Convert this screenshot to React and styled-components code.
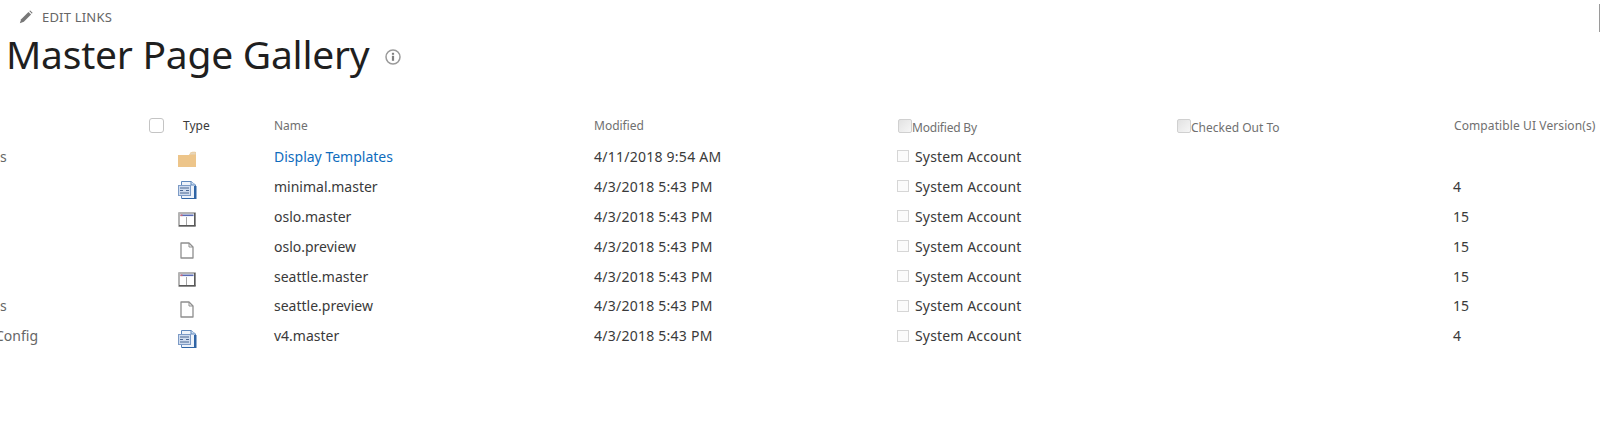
import React from "react";
import styled, { createGlobalStyle } from "styled-components";

const Global = createGlobalStyle`
  html, body { margin: 0; padding: 0; background: #fff; }
  body { font-family: "Noto Sans", "Open Sans", sans-serif; color: #333; overflow: hidden; }
`;
const Page = styled.div`
  width: 1600px; height: 425px; position: relative; overflow: hidden; background: #fff;
`;
const EditLinks = styled.div`
  display: flex; align-items: center; gap: 9px; height: 18px; padding: 8px 0 0 19px;
  font-size: 13px; letter-spacing: 0.2px; color: #666;
`;
const TitleRow = styled.div`
  display: flex; align-items: center; gap: 15px; padding: 1px 0 0 6px; height: 54px;
`;
const Title = styled.h1`
  margin: 0; font-size: 39px; font-weight: 400; line-height: 54px; color: #1f1f1f; letter-spacing: -0.25px;
`;
const InfoWrap = styled.span`
  display: flex; margin-top: 5px;
`;
const Table = styled.div`
  margin-top: 29px;
`;
const Row = styled.div`
  display: grid;
  grid-template-columns: 149px 28px 97px 320px 304px 279px 276px 1fr;
  align-items: center;
  height: ${p => (p.$header ? "31.5px" : "29.9px")};
  font-size: ${p => (p.$header ? "12px" : "14px")};
  color: ${p => (p.$header ? "#707070" : "#3a3a3a")};
  white-space: nowrap;
`;
const Nav = styled.div`
  overflow: hidden; font-size: 14px; color: #666; margin-left: ${p => p.$shift || 0}px;
`;
const RoundCheck = styled.span`
  display: block; width: 13px; height: 13px; border: 1px solid #c4c4c4; border-radius: 3px;
`;
const TypeHead = styled.div`
  padding-left: 6px; color: #3a3a3a;
`;
const IconCell = styled.div`
  display: flex; align-items: center;
  padding-left: ${p => p.$pad}px;
  margin-top: ${p => p.$drop}px;
`;
const FolderLink = styled.span`
  color: #0f6cbd;
`;
const DateCell = styled.div`
  letter-spacing: 0.25px;
`;
const VersionHead = styled.div`
  letter-spacing: 0.1px; margin-left: 1px;
`;
const HeadCheckCell = styled.div`
  display: flex; align-items: flex-start; margin-top: 3px;
  letter-spacing: ${p => p.$spacing || 0}px;
`;
const GrayCheck = styled.span`
  display: block; width: 12px; height: 12px;
  border: 1px solid #d0d0d0; border-radius: 2px;
  background: linear-gradient(135deg, #e2e2e2, #f6f6f6);
`;
const PersonCell = styled.div`
  display: flex; align-items: center; gap: 6px; margin-left: -1px; letter-spacing: 0.15px;
`;
const Presence = styled.span`
  display: block; width: 10px; height: 10px; border: 1px solid #d6d6d6; background: #fbfbfb;
`;
const ScrollMark = styled.span`
  position: absolute; right: 0; top: 4px; width: 1px; height: 28px; background: #9a9a9a;
`;

const Pencil = () => (
  <svg width="14" height="14" viewBox="0 0 13 13">
    <path d="M.8 12.2 L2 8.5 L8.8 1.8 L11.2 4.2 L4.5 11 Z" fill="#777" />
    <path d="M9.6 1 L10.4 .4 L12.6 2.6 L12 3.4 Z" fill="#777" />
  </svg>
);
const Info = () => (
  <svg width="16" height="16" viewBox="0 0 16 16">
    <circle cx="8" cy="8" r="7" fill="none" stroke="#9a9a9a" strokeWidth="1.5" />
    <rect x="6.9" y="6.8" width="2.2" height="5" fill="#808080" />
    <rect x="6.9" y="3.8" width="2.2" height="2" fill="#808080" />
  </svg>
);
const Folder = () => (
  <svg width="18" height="16" viewBox="0 0 18 16">
    <path d="M0 4 H11 L12.5 1.5 C13.5 .6 16 .6 18 1 V16 H0 Z" fill="#edc58a" />
    <path d="M12.8 1.6 L17.6 1.2 V3.6 H11.8 Z" fill="#e6d6bb" />
  </svg>
);
const Master = () => (
  <svg width="19" height="18" viewBox="0 0 19 18">
    <path d="M3.5 .5 H13 L17.5 4 V17.5 H3.5 Z" fill="#eef3fa" stroke="#5f88bd" />
    <path d="M13 .5 V4 H17.5" fill="#cfe0f2" stroke="#5f88bd" />
    <path d="M16 5 H18.5 V18 H4 V17 H16 Z" fill="#2f64a5" />
    <rect x="0.5" y="4.5" width="12" height="10" fill="#cfdcef" stroke="#7d9bc6" />
    <path d="M2 7 H11 M2 9.5 H5 M8 9.5 H11 M2 12 H11" stroke="#4a6692" strokeWidth="1.1" />
  </svg>
);
const Layout = () => (
  <svg width="18" height="15" viewBox="0 0 18 15">
    <rect width="18" height="15" rx="1" fill="#b4b4b4" />
    <rect x="2" y="2" width="14" height="11" fill="#fff" />
    <rect x="2.5" y="2.5" width="13" height="1.6" fill="#5a6cb4" />
    <rect x="2.5" y="2.5" width="2" height="1.6" fill="#cf6a74" />
    <path d="M8.5 5 V13" stroke="#a4a4a4" />
    <rect x="1" y="13" width="16.5" height="1.4" fill="#5a5a5a" />
    <rect x="16" y="1" width="1.4" height="13" fill="#5a5a5a" />
  </svg>
);
const Doc = () => (
  <svg width="14" height="17" viewBox="0 0 14 17">
    <path d="M1 1 H9 L13 5 V16 H1 Z" fill="#fff" stroke="#8f8f8f" strokeWidth="1.3" strokeLinejoin="round" />
    <path d="M9 1 V5 H13" fill="none" stroke="#8f8f8f" />
  </svg>
);

const icons = {
  folder: { C: Folder, pad: 1, drop: 5 },
  master: { C: Master, pad: 1, drop: 7 },
  layout: { C: Layout, pad: 1, drop: 6 },
  doc: { C: Doc, pad: 3, drop: 8 },
};

const files = [
  { icon: "folder", name: "Display Templates", date: "4/11/2018 9:54 AM", ver: "", link: true, nav: "s" },
  { icon: "master", name: "minimal.master", date: "4/3/2018 5:43 PM", ver: "4" },
  { icon: "layout", name: "oslo.master", date: "4/3/2018 5:43 PM", ver: "15" },
  { icon: "doc", name: "oslo.preview", date: "4/3/2018 5:43 PM", ver: "15" },
  { icon: "layout", name: "seattle.master", date: "4/3/2018 5:43 PM", ver: "15" },
  { icon: "doc", name: "seattle.preview", date: "4/3/2018 5:43 PM", ver: "15", nav: "s" },
  { icon: "master", name: "v4.master", date: "4/3/2018 5:43 PM", ver: "4", nav: "Config", shift: -5 },
];

export default function App() {
  return (
    <Page>
      <Global />
      <ScrollMark />
      <EditLinks><Pencil />EDIT LINKS</EditLinks>
      <TitleRow>
        <Title>Master Page Gallery</Title>
        <InfoWrap><Info /></InfoWrap>
      </TitleRow>
      <Table>
        <Row $header>
          <span />
          <RoundCheck />
          <TypeHead>Type</TypeHead>
          <div>Name</div>
          <div>Modified</div>
          <HeadCheckCell $spacing={-0.2}><GrayCheck />Modified By</HeadCheckCell>
          <HeadCheckCell><GrayCheck />Checked Out To</HeadCheckCell>
          <VersionHead>Compatible UI Version(s)</VersionHead>
        </Row>
        {files.map(f => {
          const { C: Icon, pad, drop } = icons[f.icon];
          return (
            <Row key={f.name}>
              <Nav $shift={f.shift}>{f.nav}</Nav>
              <span />
              <IconCell $pad={pad} $drop={drop}><Icon /></IconCell>
              <div>{f.link ? <FolderLink>{f.name}</FolderLink> : f.name}</div>
              <DateCell>{f.date}</DateCell>
              <PersonCell><Presence />System Account</PersonCell>
              <span />
              <div>{f.ver}</div>
            </Row>
          );
        })}
      </Table>
    </Page>
  );
}
